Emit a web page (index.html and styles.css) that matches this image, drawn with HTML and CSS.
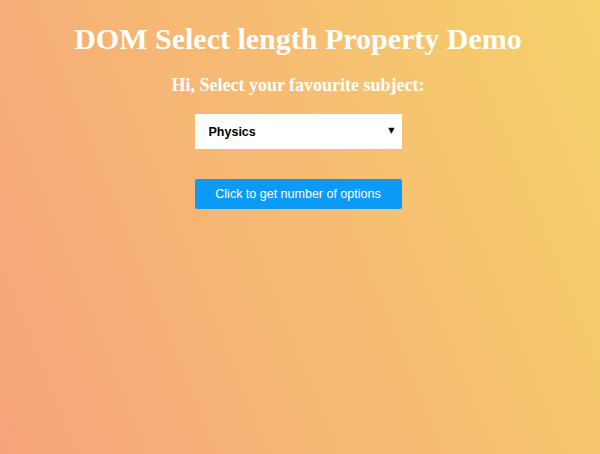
FILE: index.html
```html
<!DOCTYPE html>
<html>
	<head>
		<meta charset="utf-8">
		<title>DOM Select length Property Demo</title>
		<link rel="stylesheet" href="styles.css">
	</head>
	<body>
		<div class="page">
			<h1 class="title">DOM Select length Property Demo</h1>
			<h3 class="sub">Hi, Select your favourite subject:</h3>
			<div class="pick">
				<select id="subject" class="subject">
					<option>Physics</option>
					<option>Chemistry</option>
					<option>Maths</option>
					<option>Biology</option>
				</select>
				<span class="arrow">&#9660;</span>
			</div>
			<button id="btn" class="btn">Click to get number of options</button>
			<p id="out" class="out"></p>
		</div>
<script>
	const btn = document.getElementById('btn');
	btn.onclick = function(){
		const sel = document.getElementById('subject');
		document.getElementById('out').innerHTML = 'Number of options: ' + sel.length;
	}
</script>
	</body>
</html>
```

FILE: styles.css
```css
*{
	margin: 0;
	padding: 0;
	box-sizing: border-box;
}
html,body{
	height: 100%;
}
body{
	background: linear-gradient(68deg, #f6a47c, #f6d16a);
	font-family: "Liberation Serif", "Times New Roman", serif;
	color: #fff;
}
.page{
	display: flex;
	flex-direction: column;
	align-items: center;
	padding-top: 22px;
	padding-right: 4px;
}
.title{
	font-size: 30px;
	font-weight: bold;
	line-height: 34px;
}
.sub{
	font-size: 18px;
	font-weight: bold;
	line-height: 22px;
	margin-top: 18px;
}
.pick{
	position: relative;
	width: 207px;
	height: 35px;
	margin-top: 18px;
}
.subject{
	appearance: none;
	-webkit-appearance: none;
	width: 100%;
	height: 100%;
	border: none;
	outline: none;
	background: #fff;
	padding-left: 14px;
	font-family: "Liberation Sans", Arial, sans-serif;
	font-size: 12.5px;
	font-weight: bold;
	color: #000;
}
.arrow{
	position: absolute;
	right: 7px;
	top: 12px;
	font-size: 8px;
	color: #000;
	pointer-events: none;
	font-family: "DejaVu Sans", sans-serif;
}
.btn{
	width: 207px;
	height: 30px;
	margin-top: 30px;
	border: none;
	border-radius: 2px;
	background: #0b9af6;
	color: #fff;
	font-family: "Liberation Sans", Arial, sans-serif;
	font-size: 12.5px;
	cursor: pointer;
}
.out{
	margin-top: 12px;
	font-size: 18px;
}
```
